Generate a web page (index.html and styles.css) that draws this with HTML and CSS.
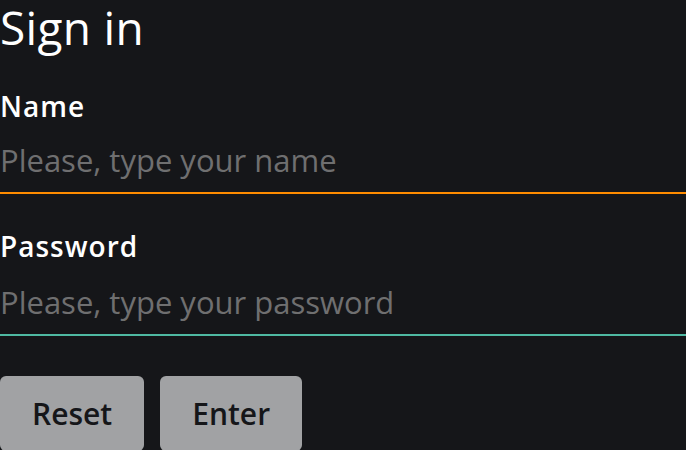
FILE: index.html
```html
<!DOCTYPE html>
<html lang="en">
<head>
<meta charset="utf-8">
<title>Sign in</title>
<link rel="stylesheet" href="styles.css">
</head>
<body>
<form class="signin">
  <h1 class="title">Sign in</h1>
  <label class="field">
    <span class="label">Name</span>
    <input class="input input-name" type="text" placeholder="Please, type your name">
  </label>
  <label class="field">
    <span class="label">Password</span>
    <input class="input input-pass" type="password" placeholder="Please, type your password">
  </label>
  <div class="actions">
    <button class="btn" type="reset">Reset</button>
    <button class="btn" type="button">Enter</button>
  </div>
</form>
</body>
</html>
```
FILE: styles.css
```css
html, body {
  margin: 0;
  padding: 0;
  background: #151619;
  height: 100%;
  overflow: hidden;
}
.signin {
  display: flex;
  flex-direction: column;
  font-family: "Open Sans", "Noto Sans", sans-serif;
  color: #ffffff;
}
.title {
  margin: 0;
  font-size: 46px;
  font-weight: 400;
  line-height: 54px;
  height: 54px;
  letter-spacing: 0.3px;
}
.field {
  display: flex;
  flex-direction: column;
  margin-top: 30px;
}
.label {
  font-size: 28px;
  font-weight: 600;
  line-height: 44px;
  height: 44px;
  letter-spacing: 1px;
}
.input {
  box-sizing: border-box;
  background: transparent;
  border: none;
  border-bottom: 2px solid #ff8c00;
  outline: none;
  padding: 0;
  margin: 0;
  height: 66px;
  font-family: inherit;
  font-size: 31px;
  color: #ffffff;
  width: 100%;
}
.input::placeholder {
  color: #6f6f70;
}
.input-pass {
  height: 68px;
  padding-top: 2px;
  border-bottom-color: #4fb9a2;
}
.actions {
  display: flex;
  gap: 16px;
  margin-top: 40px;
}
.btn {
  box-sizing: border-box;
  background: #a1a2a4;
  border: none;
  border-radius: 6px;
  height: 75px;
  padding: 0 32px;
  font-family: inherit;
  font-size: 30px;
  font-weight: 600;
  color: #151619;
}
```
